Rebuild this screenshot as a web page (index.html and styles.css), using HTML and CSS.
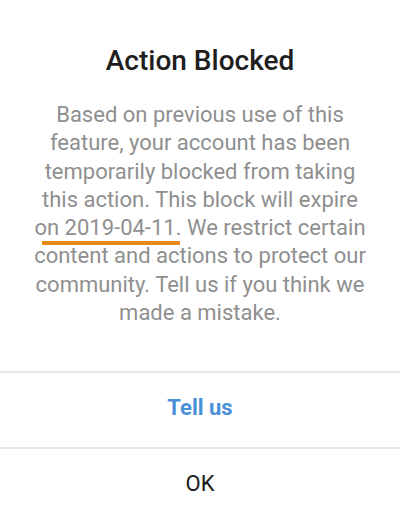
FILE: index.html
```html
<!DOCTYPE html>
<html>
<head>
<meta charset="utf-8">
<link rel="stylesheet" href="styles.css">
</head>
<body>
<div class="dialog">
  <div class="content">
    <h1 class="title">Action Blocked</h1>
    <p class="message">Based on previous use of this<br>feature, your account has been<br>temporarily blocked from taking<br>this action. This block will expire<br><span class="date">on 2019-04-11</span>. We restrict certain<br>content and actions to protect our<br>community. Tell us if you think we<br>made a mistake.</p>
  </div>
  <button class="btn btn-primary">Tell us</button>
  <button class="btn">OK</button>
</div>
</body>
</html>
```
FILE: styles.css
```css
html, body {
  margin: 0;
  padding: 0;
  background: #ffffff;
}
body {
  font-family: Roboto, "Noto Sans", sans-serif;
  width: 400px;
  height: 522px;
  overflow: hidden;
}
.dialog {
  display: flex;
  flex-direction: column;
}
.content {
  padding: 42px 10px 44px;
  text-align: center;
}
.title {
  margin: 0;
  font-size: 28px;
  font-weight: 500;
  color: #1e1e1e;
  line-height: 38px;
}
.message {
  margin: 21px 0 0;
  font-size: 22px;
  line-height: 28.3px;
  color: #8f8f8f;
  white-space: nowrap;
}
.date {
  position: relative;
}
.date::after {
  content: "";
  position: absolute;
  left: 8px;
  right: -4px;
  bottom: -5px;
  height: 4px;
  background: #e8891e;
}
.btn {
  display: block;
  width: 100%;
  height: 76px;
  border: 0;
  border-top: 2px solid #e9e9e9;
  background: #fff;
  font-family: Roboto, "Noto Sans", sans-serif;
  font-size: 22px;
  color: #1a1a1a;
  padding: 0 0 5px;
}
.btn-primary {
  color: #4a90d6;
  font-weight: 700;
}
```
